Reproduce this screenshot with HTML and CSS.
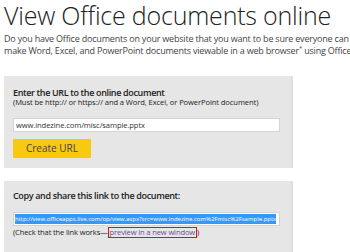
FILE: index.html
```html
<!DOCTYPE html>
<html>
<head>
<meta charset="utf-8">
<link rel="stylesheet" href="styles.css">
</head>
<body>
<h1 class="title">View Office documents online</h1>
<p class="intro">
  <span class="line">Do you have Office documents on your website that you want to be sure everyone can</span>
  <span class="line">make Word, Excel, and PowerPoint documents viewable in a web browser<sup class="star">*</sup> using Office W</span>
</p>
<section class="panel panel-create">
  <div class="label">Enter the URL to the online document</div>
  <div class="note">(Must be http:// or https:// and a Word, Excel, or PowerPoint document)</div>
  <div class="field">www.indezine.com/misc/sample.pptx</div>
  <button class="btn">Create URL</button>
</section>
<section class="panel panel-share">
  <div class="label">Copy and share this link to the document:</div>
  <div class="field field-selected"><span class="sel">http://view.officeapps.live.com/op/view.aspx?src=www.indezine.com%2Fmisc%2Fsample.pptx</span></div>
  <div class="check">(Check that the link works—<span class="mark"><a class="link" href="#">preview in a new window</a></span>)</div>
</section>
</body>
</html>
```
FILE: styles.css
```css
html, body {
  margin: 0;
  padding: 0;
  background: #ffffff;
  overflow: hidden;
}
body {
  width: 350px;
  height: 252px;
  padding-left: 4px;
  box-sizing: border-box;
  font-family: "Open Sans", "Noto Sans", sans-serif;
  color: #333333;
}
.title {
  margin: -2px 0 0 0;
  font-family: "Open Sans", "Lato", sans-serif;
  font-weight: 300;
  font-size: 25px;
  line-height: 34px;
  color: #222222;
  white-space: nowrap;
  letter-spacing: -0.2px;
}
.intro {
  margin: 0.5px 0 0 0;
  font-size: 9px;
  line-height: 12px;
  letter-spacing: -0.2px;
  color: #444444;
}
.line {
  display: block;
  white-space: nowrap;
}
.star {
  font-size: 6px;
  vertical-align: 4px;
  line-height: 0;
}
.panel {
  width: 289px;
  box-sizing: border-box;
  background: #e6e6e6;
  border-right: 2px solid #dedede;
  padding-left: 9px;
}
.panel-create {
  margin-top: 19.5px;
  height: 92px;
  padding-top: 11px;
}
.panel-share {
  margin-top: 13px;
  height: 80px;
  padding-top: 9px;
}
.label {
  font-size: 9px;
  font-weight: 600;
  line-height: 11px;
  letter-spacing: -0.35px;
  color: #222222;
  white-space: nowrap;
}
.note {
  font-size: 7.6px;
  line-height: 8px;
  letter-spacing: -0.1px;
  color: #222222;
  white-space: nowrap;
}
.field {
  margin-top: 12px;
  width: 267px;
  height: 14px;
  box-sizing: border-box;
  background: #ffffff;
  border: 1px solid #d4d4d4;
  padding-left: 2px;
  font-size: 7.6px;
  line-height: 12px;
  letter-spacing: -0.1px;
  color: #333333;
  white-space: nowrap;
  overflow: hidden;
}
.field-selected {
  margin-top: 11px;
  padding-left: 1px;
  font-size: 6px;
  letter-spacing: 0;
}
.sel {
  background: #3399ff;
  color: #ffffff;
  display: inline-block;
  line-height: 10px;
  margin-top: 1px;
}
.btn {
  display: block;
  margin-top: 7px;
  width: 78px;
  height: 19px;
  padding: 0;
  border: none;
  background: #f7c90f;
  font-family: "Open Sans", "Noto Sans", sans-serif;
  font-size: 10px;
  line-height: 19px;
  color: #444444;
}
.check {
  font-size: 7.6px;
  line-height: 12px;
  letter-spacing: -0.15px;
  color: #222222;
  white-space: nowrap;
}
.mark {
  display: inline-block;
  border: 1.5px solid #e0101a;
  padding: 0 1px;
  line-height: 9px;
}
.link {
  color: #7b3fa6;
  text-decoration: none;
}
```
